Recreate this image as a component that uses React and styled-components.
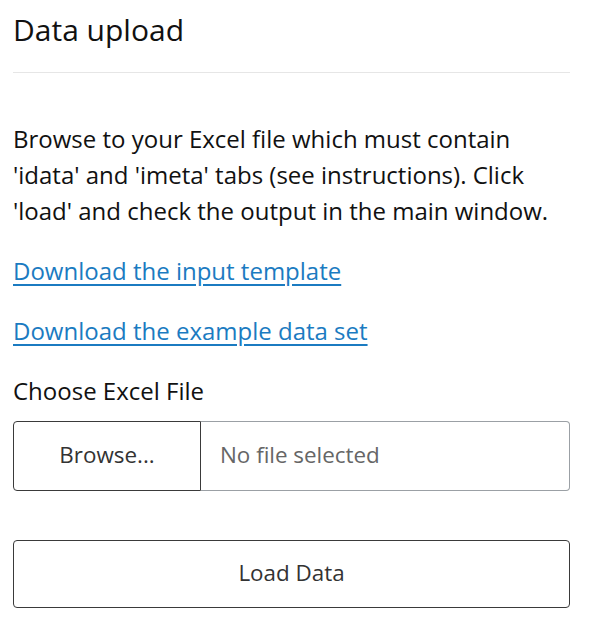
import React from 'react';
import styled, { createGlobalStyle } from 'styled-components';

const GlobalStyle = createGlobalStyle`
    body {
        margin: 0;
        background: #fff;
        font-family: "Open Sans", "Noto Sans", sans-serif;
        color: #111;
    }
`;

const StyledPanel = styled.div`
    width: 557px;
    padding: 12px 27px 0 13px;
`;

const StyledTitle = styled.h2`
    margin: 0;
    font-size: 30px;
    font-weight: 400;
    line-height: 36px;
    color: #111;
`;

const StyledDivider = styled.hr`
    margin: 24px 0 48px;
    border: none;
    border-top: 1px solid #e6e6e6;
`;

const StyledText = styled.p`
    margin: 0 0 24px;
    font-size: 24px;
    line-height: 36px;
`;

const StyledLink = styled.a`
    display: block;
    margin-bottom: 24px;
    font-size: 24px;
    line-height: 36px;
    color: #1b7bc1;
    text-decoration: underline;
    text-underline-offset: 4px;
`;

const StyledLabel = styled.label`
    display: block;
    margin-bottom: 12px;
    font-size: 24px;
    line-height: 36px;
`;

const StyledFileRow = styled.div`
    display: flex;
    height: 70px;
    margin-bottom: 49px;
`;

const StyledBrowse = styled.button`
    width: 188px;
    padding: 0 0 3px;
    border: 1px solid #3a3a3a;
    border-radius: 4px 0 0 4px;
    background: #fff;
    font-family: inherit;
    font-size: 22.4px;
    color: #333;
    cursor: pointer;
`;

const StyledFileName = styled.div`
    flex: 1;
    display: flex;
    align-items: center;
    padding: 0 0 3px 19px;
    border: 1px solid #9ba0a5;
    border-left: none;
    border-radius: 0 4px 4px 0;
    font-size: 22.4px;
    color: #666;
`;

const StyledButton = styled.button`
    display: block;
    width: 100%;
    height: 68px;
    padding: 0 0 3px;
    border: 1px solid #3a3a3a;
    border-radius: 4px;
    background: #fff;
    font-family: inherit;
    font-size: 22.4px;
    color: #333;
    cursor: pointer;
`;

const App = () => (
    <StyledPanel>
        <GlobalStyle />
        <StyledTitle>Data upload</StyledTitle>
        <StyledDivider />
        <StyledText>
            Browse to your Excel file which must contain 'idata' and 'imeta' tabs (see instructions). Click 'load' and check the output in the main window.
        </StyledText>
        <StyledLink href="#">Download the input template</StyledLink>
        <StyledLink href="#">Download the example data set</StyledLink>
        <StyledLabel>Choose Excel File</StyledLabel>
        <StyledFileRow>
            <StyledBrowse>Browse...</StyledBrowse>
            <StyledFileName>No file selected</StyledFileName>
        </StyledFileRow>
        <StyledButton>Load Data</StyledButton>
    </StyledPanel>
);

export default App;
